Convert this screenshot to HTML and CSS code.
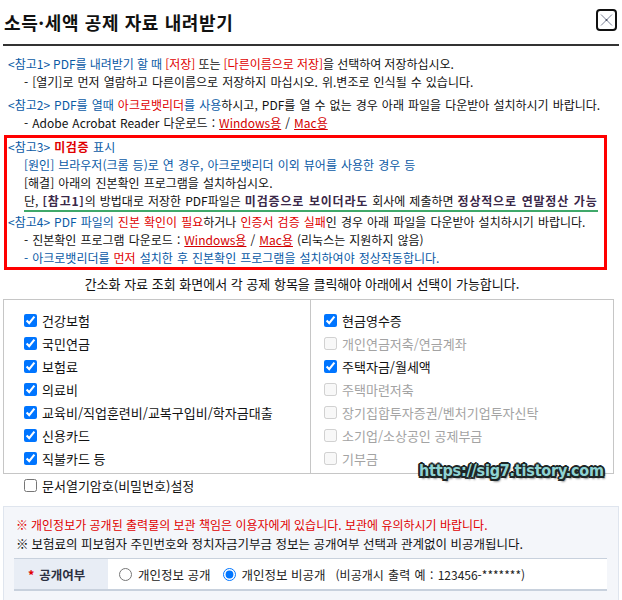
FILE: index.html
```html
<!DOCTYPE html>
<html lang="ko">
<head>
<meta charset="utf-8">
<title>소득·세액 공제 자료 내려받기</title>
<link rel="stylesheet" href="styles.css">
</head>
<body>
<div class="page">
  <header class="hd">
    <h1>소득·세액 공제 자료 내려받기</h1>
    <button class="close" type="button" aria-label="닫기">
      <svg width="21" height="22" viewBox="0 0 21 22"><rect x="1" y="1" width="19" height="20" rx="3" fill="#fff" stroke="#111" stroke-width="2"/><path d="M5 5.5L16 16.5M16 5.5L5 16.5" stroke="#7a8196" stroke-width="1"/><circle cx="10.5" cy="11" r="1" fill="#4a5066"/></svg>
    </button>
  </header>

  <div class="notes">
    <p><span class="b">&lt;참고1&gt; PDF를 내려받기 할 때 </span><span class="r">[저장]</span> 또는 <span class="r">[다른이름으로 저장]</span>을 선택하여 저장하십시오.</p>
    <p class="ind">- [열기]로 먼저 열람하고 다른이름으로 저장하지 마십시오. 위.변조로 인식될 수 있습니다.</p>
    <p class="gap"><span class="b">&lt;참고2&gt; PDF를 열때 </span><span class="r">아크로뱃리더</span><span class="b">를 사용</span>하시고, PDF를 열 수 없는 경우 아래 파일을 다운받아 설치하시기 바랍니다.</p>
    <p class="ind">- Adobe Acrobat Reader 다운로드 : <span class="lk">Windows용</span> / <span class="lk">Mac용</span></p>
  </div>

  <div class="alert">
    <p><span class="b">&lt;참고3&gt; </span><strong class="r">미검증</strong><span class="b"> 표시</span></p>
    <p class="ind b">[원인] 브라우저(크롬 등)로 연 경우, 아크로뱃리더 이외 뷰어를 사용한 경우 등</p>
    <p class="ind">[해결] 아래의 진본확인 프로그램을 설치하십시오.</p>
    <p class="sum">단, <strong>[참고1]</strong>의 방법대로 저장한 PDF파일은 <strong>미검증으로 보이더라도</strong> 회사에 제출하면 <strong>정상적으로 연말정산 가능</strong></p>
    <p><span class="b">&lt;참고4&gt; PDF 파일의 </span><span class="r">진본 확인이 필요</span>하거나 <span class="r">인증서 검증 실패</span>인 경우 아래 파일을 다운받아 설치하시기 바랍니다.</p>
    <p class="ind">- 진본확인 프로그램 다운로드 : <span class="lk">Windows용</span> / <span class="lk">Mac용</span> (리눅스는 지원하지 않음)</p>
    <p class="ind b">- 아크로뱃리더를 <span class="r">먼저</span> 설치한 후 진본확인 프로그램을 설치하여야 정상작동합니다.</p>
  </div>

  <p class="guide">간소화 자료 조회 화면에서 각 공제 항목을 클릭해야 아래에서 선택이 가능합니다.</p>

  <div class="choose">
    <ul class="col">
      <li><input type="checkbox" checked><span>건강보험</span></li>
      <li><input type="checkbox" checked><span>국민연금</span></li>
      <li><input type="checkbox" checked><span>보험료</span></li>
      <li><input type="checkbox" checked><span>의료비</span></li>
      <li><input type="checkbox" checked><span>교육비/직업훈련비/교복구입비/학자금대출</span></li>
      <li><input type="checkbox" checked><span>신용카드</span></li>
      <li><input type="checkbox" checked><span>직불카드 등</span></li>
    </ul>
    <ul class="col">
      <li><input type="checkbox" checked><span>현금영수증</span></li>
      <li class="off"><input type="checkbox" disabled><span>개인연금저축/연금계좌</span></li>
      <li><input type="checkbox" checked><span>주택자금/월세액</span></li>
      <li class="off"><input type="checkbox" disabled><span>주택마련저축</span></li>
      <li class="off"><input type="checkbox" disabled><span>장기집합투자증권/벤처기업투자신탁</span></li>
      <li class="off"><input type="checkbox" disabled><span>소기업/소상공인 공제부금</span></li>
      <li class="off"><input type="checkbox" disabled><span>기부금</span></li>
    </ul>
  </div>

  <label class="pw"><input type="checkbox"><span>문서열기암호(비밀번호)설정</span></label>

  <div class="info">
    <p class="warn r"><span class="mk">※</span>개인정보가 공개된 출력물의 보관 책임은 이용자에게 있습니다. 보관에 유의하시기 바랍니다.</p>
    <p class="warn w2"><span class="mk">※</span>보험료의 피보험자 주민번호와 정치자금기부금 정보는 공개여부 선택과 관계없이 비공개됩니다.</p>
    <div class="row">
      <div class="th"><span class="req">*</span>공개여부</div>
      <div class="td">
        <label class="opt"><input type="radio" name="open"><span>개인정보 공개</span></label>
        <label class="opt"><input type="radio" name="open" checked><span>개인정보 비공개</span></label>
        <span class="ex">(비공개시 출력 예 : 123456-*******)</span>
      </div>
    </div>
  </div>

  <div class="wm">https://sig7.tistory.com</div>
</div>
</body>
</html>
```

FILE: styles.css
```css
* { box-sizing: border-box; }

body {
  margin: 0;
  background: #fff;
  color: #111;
  font-family: "Noto Sans CJK KR", "Noto Sans", sans-serif;
}

.page {
  position: relative;
  width: 622px;
  height: 600px;
  overflow: hidden;
}

p { margin: 0; white-space: nowrap; }

.b { color: #0a5aa5; }
.r { color: #e00000; }
.lk { color: #d40000; text-decoration: underline; }

/* header */
.hd {
  display: flex;
  justify-content: space-between;
  align-items: flex-start;
  margin: 0 3px;
  height: 46px;
  border-bottom: 2px solid #333;
}

.hd h1 {
  margin: 0 0 0 1px;
  padding-top: 8px;
  font-size: 18px;
  line-height: 28px;
  font-weight: 700;
  letter-spacing: 0.6px;
  color: #111;
}

.close {
  margin: 9px 2px 0 0;
  padding: 0;
  width: 21px;
  height: 22px;
  border: 0;
  background: none;
  display: block;
}
.close svg { display: block; }

/* notes */
.notes {
  margin: 9px 0 0 8px;
  font-size: 12px;
  line-height: 18px;
  word-spacing: 0.7px;
}
.notes p:first-child { word-spacing: -0.3px; }

.ind { padding-left: 16px; }
.gap { margin-top: 5px; }

.alert {
  margin: 3px 15px 0 4px;
  border: 3px solid #ff0000;
  padding: 0 0 0 1px;
  font-size: 12px;
  line-height: 18px;
  word-spacing: 0.7px;
}

.alert strong.r { font-weight: 700; letter-spacing: 0.6px; }

.sum {
  margin: 0 6px 1px 16px;
  border-bottom: 2px solid #40a86a;
}
.sum strong { color: #3a2848; font-weight: 700; letter-spacing: 0.8px; }

.guide {
  margin: 5px 0 0;
  padding-right: 18px;
  text-align: center;
  font-size: 13px;
  line-height: 18px;
}

/* checkbox table */
.choose {
  margin: 6px 8px 0 3px;
  border: 1px solid #c6c6c6;
  display: grid;
  grid-template-columns: 306px 1fr;
}

.col {
  list-style: none;
  margin: 0;
  padding: 9px 0 3px 20px;
}
.col + .col {
  border-left: 1px solid #c6c6c6;
  padding-left: 13px;
}

.col li {
  display: flex;
  align-items: center;
  height: 23px;
  font-size: 13px;
  color: #111;
  white-space: nowrap;
}
.col li.off { color: #a3a3a3; }

input[type="checkbox"] {
  margin: 0 5px 0 0;
  width: 13px;
  height: 13px;
}

.pw {
  display: flex;
  align-items: center;
  height: 23px;
  padding-left: 24px;
  font-size: 13px;
}

/* info panel */
.info {
  margin: 9px 3px 0;
  border: 1px solid #dfe5ee;
  background: #f4f6fa;
  padding: 8px 0 14px;
}

.warn {
  padding-left: 12px;
  font-size: 12px;
  line-height: 19px;
}
.warn.w2 { font-size: 12.5px; }
.warn .mk { margin-right: 3px; }

.row {
  display: flex;
  margin: 5px 11px 0 10px;
  height: 33px;
  border-top: 1px solid #c8d1dd;
  border-bottom: 2px solid #c8d1dd;
}

.th {
  width: 94px;
  background: #e8edf5;
  display: flex;
  align-items: center;
  padding-left: 14px;
  font-size: 12.5px;
  font-weight: 700;
  color: #2d3142;
}
.req { color: #e00000; margin-right: 5px; }

.td {
  flex: 1;
  background: #fff;
  display: flex;
  align-items: center;
  padding-left: 11px;
  font-size: 12.5px;
  color: #222;
  white-space: nowrap;
}

.opt { display: flex; align-items: center; }
.opt + .opt { margin-left: 12px; }
input[type="radio"] {
  margin: 0 6px 0 0;
  width: 13px;
  height: 13px;
}
.ex { margin-left: 10px; font-size: 12px; word-spacing: 1px; }

/* watermark overlay */
.wm {
  position: absolute;
  left: 419px;
  top: 461px;
  font-family: "DejaVu Sans Condensed", "DejaVu Sans", sans-serif;
  font-stretch: condensed;
  font-weight: 700;
  font-size: 16px;
  line-height: 20px;
  letter-spacing: -0.2px;
  color: #8fd3d3;
  text-shadow:
    2px 0 #1e2626, -2px 0 #1e2626, 0 2px #1e2626, 0 -2px #1e2626,
    1.5px 1.5px #1e2626, -1.5px -1.5px #1e2626, 1.5px -1.5px #1e2626, -1.5px 1.5px #1e2626,
    2px 3px 2px rgba(0,0,0,0.45);
}
```
